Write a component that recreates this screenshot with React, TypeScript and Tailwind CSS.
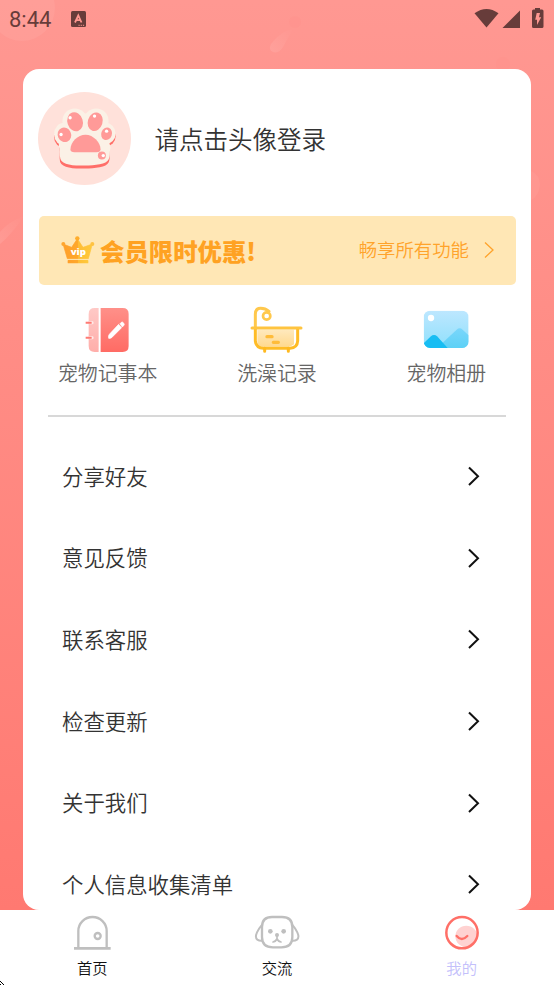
import type { ReactNode } from 'react';

interface Shortcut {
    label: string;
    icon: ReactNode;
}

interface Tab {
    label: string;
    icon: ReactNode;
    active?: boolean;
}

const menuItems = ['分享好友', '意见反馈', '联系客服', '检查更新', '关于我们', '个人信息收集清单'];

const PawShape = () => (
    <>
        <ellipse cx="165" cy="153" rx="37" ry="38" />
        <ellipse cx="229" cy="153" rx="37" ry="38" />
        <ellipse cx="134" cy="192" rx="31" ry="34" />
        <ellipse cx="257" cy="190" rx="30" ry="32" />
        <path d="M165 130H230L262 195L272 232C268 245 272 256 266 268C260 282 225 286 195 286C160 286 128 284 122 266C118 252 122 240 117 225L128 170Z" />
    </>
);

const PawAvatar = () => (
    <svg viewBox="55 66 278 278" className="size-[93px] shrink-0">
        <circle cx="194" cy="205" r="139" fill="#ffe1da" />
        <g fill="#ff6f69" transform="translate(0 9)">
            <ellipse cx="134" cy="192" rx="31" ry="32" />
            <ellipse cx="257" cy="190" rx="30" ry="30" />
            <path d="M165 130H230L262 195L270 232C267 245 272 256 266 268C260 282 225 286 195 286C160 286 128 284 121 266C118 252 122 240 119 225L128 170Z" />
        </g>
        <g fill="#fbf1e6">
            <PawShape />
        </g>
        <g fill="#ff9a98">
            <ellipse cx="166" cy="155" rx="23" ry="29" transform="rotate(-18 166 155)" />
            <ellipse cx="226" cy="155" rx="22" ry="28" transform="rotate(18 226 155)" />
            <ellipse cx="134" cy="194" rx="20" ry="22" transform="rotate(-25 134 194)" />
            <ellipse cx="260" cy="191" rx="16" ry="19" transform="rotate(20 260 191)" />
            <path d="M152 238C152 216 174 194 197 194C221 194 242 218 242 237C242 243 238 246 230 246H164C156 246 152 244 152 238Z" />
            <circle cx="246" cy="256" r="12" />
        </g>
        <g fill="#fff">
            <circle cx="151" cy="143" r="5" />
            <circle cx="224" cy="138" r="5" />
            <circle cx="124" cy="193" r="5" />
            <circle cx="260" cy="183" r="5" />
            <circle cx="250" cy="256" r="5" />
        </g>
    </svg>
);

const CrownIcon = () => (
    <svg viewBox="78 80 102 84" className="h-[28px] w-[34px] shrink-0">
        <defs>
            <linearGradient id="crown" x1="0" x2="1">
                <stop offset="0" stopColor="#ff9f2a" />
                <stop offset=".5" stopColor="#ffa82b" />
                <stop offset=".52" stopColor="#ffbd35" />
                <stop offset="1" stopColor="#ffc93c" />
            </linearGradient>
        </defs>
        <path
            d="M84 104L110 114L127 88L144 114L172 104L160 148H97Z"
            fill="url(#crown)"
            stroke="url(#crown)"
            strokeWidth="2"
            strokeLinejoin="round"
        />
        <rect x="98" y="152" width="62" height="10" rx="2" fill="url(#crown)" />
        <circle cx="85" cy="104" r="6" fill="#ffa62f" />
        <circle cx="127" cy="87" r="6.5" fill="#ffad2c" />
        <circle cx="172" cy="104" r="6" fill="#ffc242" />
        <text
            x="130"
            y="137"
            textAnchor="middle"
            textLength="46"
            lengthAdjust="spacingAndGlyphs"
            fill="#fff"
            fontSize="27"
            fontWeight="800"
            fontFamily="Open Sans, sans-serif"
        >
            vip
        </text>
    </svg>
);

const NotebookIcon = () => (
    <svg viewBox="136 36 133 138" className="relative -left-[1px] h-[46px] w-[44.3px]">
        <defs>
            <linearGradient id="cover" x2="0" y2="1">
                <stop stopColor="#ff9089" />
                <stop offset="1" stopColor="#ff6b64" />
            </linearGradient>
            <linearGradient id="spine" x2="0" y2="1">
                <stop stopColor="#ffc9c6" />
                <stop offset="1" stopColor="#ffaeaa" />
            </linearGradient>
        </defs>
        <path d="M177 39V171H165Q147 171 147 153V57Q147 39 165 39Z" fill="url(#spine)" />
        <path d="M183 39H249Q267 39 267 57V153Q267 171 249 171H183Z" fill="url(#cover)" />
        <path d="M150 83H157M150 128H157" stroke="#ffe9e7" strokeWidth="10" strokeLinecap="round" />
        <path d="M138 83H156M138 128H156" stroke="#ff7a73" strokeWidth="6" />
        <path d="M241 86L245 82Q248 79 252 84Q256 89 252 92L248 96ZM237 88L246 98L216 128Q212 131 207 130Q205 123 209 118Z" fill="#fff" stroke="#fff" strokeWidth="2" />
    </svg>
);

const BathIcon = () => (
    <svg viewBox="90 33 159 144" className="h-[48px] w-[53px]" fill="none">
        <defs>
            <linearGradient id="tub" x1="0" y1="0" x2="0" y2="1">
                <stop stopColor="#ffe9bd" />
                <stop offset="1" stopColor="#ffd98f" />
            </linearGradient>
        </defs>
        <path d="M112 104H222V148Q216 154 206 155H128Q112 153 112 138Z" fill="url(#tub)" />
        <path d="M106 100V58Q106 40 122 40Q136 40 147 49" stroke="#ffc84c" strokeWidth="9" strokeLinecap="round" />
        <circle cx="140" cy="63" r="11" stroke="#ffc84c" strokeWidth="8" />
        <path d="M106 100V138Q108 159 130 160H210Q232 158 233 138V100" stroke="#ffbc26" strokeWidth="9" />
        <path d="M96 99H243" stroke="#ffc43f" strokeWidth="9" strokeLinecap="round" />
        <path d="M134 160V169M205 160V169" stroke="#ffb91f" strokeWidth="9" strokeLinecap="round" />
        <path d="M141 125H156M160 142H175" stroke="#ffbc3a" strokeWidth="10" strokeLinecap="round" />
    </svg>
);

const AlbumIcon = () => (
    <svg viewBox="100 46 139 116" className="relative -top-[1px] h-[38.6px] w-[46.3px]">
        <defs>
            <linearGradient id="sky" x2="0" y2="1">
                <stop stopColor="#bde7ff" />
                <stop offset="1" stopColor="#8fe0fb" />
            </linearGradient>
            <linearGradient id="hill" x2="0" y2="1">
                <stop stopColor="#7ad6fb" />
                <stop offset="1" stopColor="#5dd1f6" />
            </linearGradient>
            <clipPath id="photo">
                <rect x="102" y="48" width="135" height="112" rx="19" />
            </clipPath>
        </defs>
        <g clipPath="url(#photo)">
            <rect x="102" y="48" width="135" height="112" fill="url(#sky)" />
            <path d="M155 148L201 105Q210 97 219 105L237 122V160H150Z" fill="url(#hill)" />
            <path d="M102 146L123 126Q133 117 143 126L174 160H102Z" fill="#17bdf3" />
        </g>
        <circle cx="124" cy="70" r="9.5" fill="#fff" />
    </svg>
);

const DoorIcon = () => (
    <svg viewBox="219 60 117 108" className="h-9 w-[39px]" fill="none" stroke="#bfbfbf">
        <path d="M235 159V108A42.5 42 0 0 1 320 108V159" strokeWidth="7" />
        <path d="M222 160H332" strokeWidth="8" />
        <circle cx="293" cy="123" r="9" strokeWidth="7" />
    </svg>
);

const DogIcon = () => (
    <svg viewBox="192 60 138 108" className="h-9 w-[46px]" fill="none" stroke="#bfbfbf" strokeWidth="7">
        <path d="M216 96C216 76 225 66 246 66H276C298 66 307 76 307 96V126C307 147 297 157 274 157H249C226 157 216 147 216 126Z" />
        <path d="M217 88Q206 101 201 112Q194 128 202 134Q209 139 219 137" strokeWidth="6" />
        <path d="M306 88Q317 101 322 112Q329 128 321 134Q314 139 304 137" strokeWidth="6" />
        <path d="M261 121V132M261 131Q256 142 247 141M261 131Q266 142 275 141" strokeWidth="5" />
        <g fill="#bfbfbf" stroke="none">
            <circle cx="241" cy="109" r="7" />
            <circle cx="281" cy="109" r="7" />
            <circle cx="261" cy="120" r="6" />
        </g>
    </svg>
);

const MineIcon = () => (
    <svg viewBox="221 60 108 108" className="size-9" fill="none">
        <ellipse cx="288" cy="124" rx="33" ry="32" fill="#ffd2d1" />
        <circle cx="275" cy="113" r="47" stroke="#ff6f67" strokeWidth="7.5" />
        <path d="M259 123Q274 141 291 123" stroke="#ff7068" strokeWidth="7" strokeLinecap="round" />
    </svg>
);

const shortcuts: Shortcut[] = [
    { label: '宠物记事本', icon: <NotebookIcon /> },
    { label: '洗澡记录', icon: <BathIcon /> },
    { label: '宠物相册', icon: <AlbumIcon /> },
];

const tabs: Tab[] = [
    { label: '首页', icon: <DoorIcon /> },
    { label: '交流', icon: <DogIcon /> },
    { label: '我的', icon: <MineIcon />, active: true },
];

const Backdrop = () => (
    <svg viewBox="0 0 554 910" className="absolute inset-x-0 top-0 -z-10 h-[910px] w-full">
        <defs>
            <linearGradient id="streak" x1="1" y1="0" x2="0" y2="1">
                <stop stopColor="#fff" stopOpacity="0" />
                <stop offset="1" stopColor="#fff" stopOpacity=".1" />
            </linearGradient>
        </defs>
        <circle cx="22" cy="8" r="33" fill="#fff" fillOpacity=".06" />
        <path d="M293 29Q282 30 271 44Q268 50 273 52Q279 54 283 47Z" fill="url(#streak)" />
        <circle cx="295" cy="22" r="6" fill="#ff8d86" fillOpacity=".2" />
        <circle cx="503" cy="64" r="7" fill="#ff8d86" fillOpacity=".2" />
        <path d="M24 216Q8 222 0 232V244Q12 234 24 216Z" fill="url(#streak)" />
        <path d="M531 171Q540 175 540 185Q539 196 531 200Z" fill="#fff" fillOpacity=".05" />
    </svg>
);

const StatusBar = () => (
    <header className="flex h-[69px] items-start justify-between pt-[7px] pr-[10px] pl-[9px] text-[#673c3a]">
        <div className="flex items-center">
            <span className="font-[Roboto] text-[22px] leading-[25px] font-normal">8:44</span>
            <svg viewBox="0 0 15 16" className="relative -top-[1px] ml-5 h-4 w-[15px]">
                <rect width="15" height="16" rx="1.5" fill="currentColor" />
                <path d="M4 11.5L7.3 4.5L10.5 11.5M5.2 9.2H9.4" fill="none" stroke="#ff9790" strokeWidth="1.8" />
                <path d="M7.5 14.3H13.5" stroke="#ff9790" strokeWidth="1" strokeDasharray="1.2 1" />
            </svg>
        </div>
        <svg viewBox="0 0 70 20" className="mt-[1px] h-5 w-[70px]" fill="currentColor">
            <path d="M0.5 5.3Q12.5 -3.2 24.5 5.3L12.5 19.5Z" />
            <path d="M46 2.5V20H28.5Z" />
            <path d="M61 0H66V1.5H68Q69.5 1.5 69.5 3V18.5Q69.5 20 68 20H59.5Q58 20 58 18.5V3Q58 1.5 59.5 1.5H61Z" />
            <path d="M62.7 5H66L65 9.2H67.2L63 17V11.8H61.2Z" fill="#ff9790" />
        </svg>
    </header>
);

export default function App() {
    return (
        <div className="relative isolate flex h-[985px] w-full flex-col overflow-hidden bg-white font-['Noto_Sans_CJK_SC',sans-serif] font-[350]">
            <div className="absolute inset-x-0 top-0 -z-20 h-[910px] bg-gradient-to-b from-[#ff9892] to-[#ff7971]" />
            <Backdrop />
            <StatusBar />

            <main className="mx-[23px] flex h-[841px] shrink-0 flex-col overflow-hidden rounded-2xl bg-white">
                <section className="flex items-center gap-[23.5px] px-[15px] pt-[23px]">
                    <PawAvatar />
                    <h1 className="text-[24.5px] leading-9 font-[350] text-[#333]">请点击头像登录</h1>
                </section>

                <section className="mx-[15.5px] mt-[30.5px] flex h-[69px] shrink-0 items-center rounded-[5px] bg-[#ffe7b5] pr-[22px] pl-[22.5px]">
                    <CrownIcon />
                    <strong className="mt-px ml-[5px] text-[24.4px] leading-9 font-black text-[#ffa222]">会员限时优惠!</strong>
                    <span className="ml-auto text-[18.4px] text-[#ffa32b]">畅享所有功能</span>
                    <svg viewBox="0 0 10 16" className="ml-[14.5px] h-4 w-[10px]" fill="none" stroke="#ffa32b" strokeWidth="1.3">
                        <path d="M1 0.5L9 8L1 15.5" />
                    </svg>
                </section>

                <section className="grid grid-cols-3 pt-[20.5px]">
                    {shortcuts.map((item) => (
                        <div key={item.label} className="flex flex-col items-center">
                            <div className="flex h-[50px] items-center">{item.icon}</div>
                            <span className="mt-[3px] text-[19.9px] leading-[30px] text-[#666]">{item.label}</span>
                        </div>
                    ))}
                </section>

                <hr className="mx-[25px] mt-[27px] h-[1.5px] shrink-0 border-0 bg-[#d8d8d8]" />

                <ul className="mt-[18.5px]">
                    {menuItems.map((item) => (
                        <li key={item} className="flex h-[81.6px] items-center justify-between pr-[51px] pl-[39px]">
                            <span className="text-[21.4px] text-[#333]">{item}</span>
                            <svg viewBox="0 0 13 20" className="mt-px h-5 w-[13px]" fill="none" stroke="#111" strokeWidth="2">
                                <path d="M2 1.5L11 10.3L2 19" />
                            </svg>
                        </li>
                    ))}
                </ul>
            </main>

            <nav className="grid flex-1 grid-cols-3 bg-white pt-[5px]">
                {tabs.map((tab) => (
                    <div key={tab.label} className="flex flex-col items-center">
                        {tab.icon}
                        <span className={`mt-[5px] text-[15.3px] leading-[23px] ${tab.active ? 'text-[#c3c0fb]' : 'text-[#111]'}`}>
                            {tab.label}
                        </span>
                    </div>
                ))}
            </nav>

            <svg viewBox="0 0 4 4" className="absolute bottom-0 left-0 size-1" shapeRendering="crispEdges">
                <path d="M0 0H1V1H0ZM1 1H2V2H1ZM2 2H3V3H2ZM3 3H4V4H3ZM0 3H1V4H0Z" />
            </svg>
        </div>
    );
}
